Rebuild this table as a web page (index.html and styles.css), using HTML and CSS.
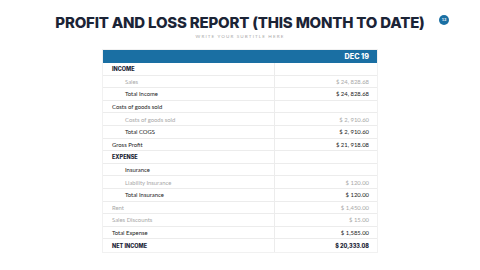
FILE: index.html
```html
<!DOCTYPE html>
<html>
<head>
<meta charset="utf-8">
<link rel="stylesheet" href="styles.css">
</head>
<body>
<div class="slide">
  <header class="head">
    <h1 class="title">PROFIT AND LOSS REPORT (THIS MONTH TO DATE)</h1>
    <p class="subtitle">WRITE YOUR SUBTITLE HERE</p>
  </header>
  <div class="badge">13</div>
  <div class="report">
    <div class="row hdr"><div class="c1"></div><div class="c2">DEC 19</div></div>
    <div class="row"><div class="c1 strong">INCOME</div><div class="c2"></div></div>
    <div class="row"><div class="c1 ind muted">Sales</div><div class="c2 muted">$ 24, 828.68</div></div>
    <div class="row"><div class="c1 ind">Total Income</div><div class="c2">$ 24, 828.68</div></div>
    <div class="row"><div class="c1">Costs of goods sold</div><div class="c2"></div></div>
    <div class="row"><div class="c1 ind muted">Costs of goods sold</div><div class="c2 muted">$ 2, 910.60</div></div>
    <div class="row"><div class="c1 ind">Total COGS</div><div class="c2">$ 2, 910.60</div></div>
    <div class="row"><div class="c1">Gross Profit</div><div class="c2">$ 21, 918.08</div></div>
    <div class="row"><div class="c1 strong">EXPENSE</div><div class="c2"></div></div>
    <div class="row"><div class="c1 ind">Insurance</div><div class="c2"></div></div>
    <div class="row"><div class="c1 ind muted">Liability Insurance</div><div class="c2 muted">$ 120.00</div></div>
    <div class="row"><div class="c1 ind">Total Insurance</div><div class="c2">$ 120.00</div></div>
    <div class="row"><div class="c1 muted">Rent</div><div class="c2 muted">$ 1,450.00</div></div>
    <div class="row"><div class="c1 muted">Sales Discounts</div><div class="c2 muted">$ 15.00</div></div>
    <div class="row"><div class="c1">Total Expense</div><div class="c2">$ 1,585.00</div></div>
    <div class="row last"><div class="c1 strong">NET INCOME</div><div class="c2 strong">$ 20,333.08</div></div>
  </div>
</div>
</body>
</html>
```
FILE: styles.css
```css
html, body {
  margin: 0;
  padding: 0;
  background: #ffffff;
}
.slide {
  position: relative;
  width: 480px;
  height: 270px;
  overflow: hidden;
  display: flex;
  flex-direction: column;
  align-items: center;
  font-family: Lato, "Liberation Sans", sans-serif;
}
.head {
  padding-top: 14px;
  display: flex;
  flex-direction: column;
  align-items: center;
}
.title {
  margin: 0;
  font-family: Inter, "Liberation Sans", sans-serif;
  font-weight: 800;
  font-size: 15px;
  line-height: 18px;
  letter-spacing: -0.2px;
  color: #1b2436;
  white-space: nowrap;
}
.subtitle {
  margin: 1px 0 0 0;
  font-family: Lato, "Liberation Sans", sans-serif;
  font-size: 4.6px;
  line-height: 6px;
  letter-spacing: 1.1px;
  color: #a9a9a9;
}
.badge {
  position: absolute;
  left: 439px;
  top: 15px;
  width: 10px;
  height: 10px;
  border-radius: 50%;
  background: #1a6fa3;
  color: #ffffff;
  font-size: 4px;
  line-height: 10px;
  text-align: center;
  font-weight: 700;
}
.report {
  margin-top: 10px;
  width: 276px;
  border: 1px solid #f1f1f1;
  box-sizing: border-box;
  display: flex;
  flex-direction: column;
}
.row {
  display: grid;
  grid-template-columns: 172px 1fr;
  height: 12.6px;
  border-bottom: 1px solid #ececec;
  box-sizing: border-box;
  font-size: 5.9px;
  color: #222222;
}
.row.last {
  border-bottom: none;
}
.row.hdr {
  height: 13px;
  background: #1a6fa3;
  border-bottom: none;
}
.c1, .c2 {
  display: flex;
  align-items: center;
}
.c1 {
  padding-left: 9px;
  border-right: 1px solid #ececec;
}
.hdr .c1 {
  border-right: none;
}
.c2 {
  justify-content: flex-end;
  padding-right: 8px;
}
.hdr .c2 {
  font-family: Inter, "Liberation Sans", sans-serif;
  font-weight: 800;
  font-size: 7.2px;
  color: #ffffff;
}
.ind {
  padding-left: 22px;
}
.muted {
  color: #a8a8a8;
}
.strong {
  font-family: Inter, "Liberation Sans", sans-serif;
  font-weight: 800;
  font-size: 5.5px;
  color: #1b2436;
}
```
